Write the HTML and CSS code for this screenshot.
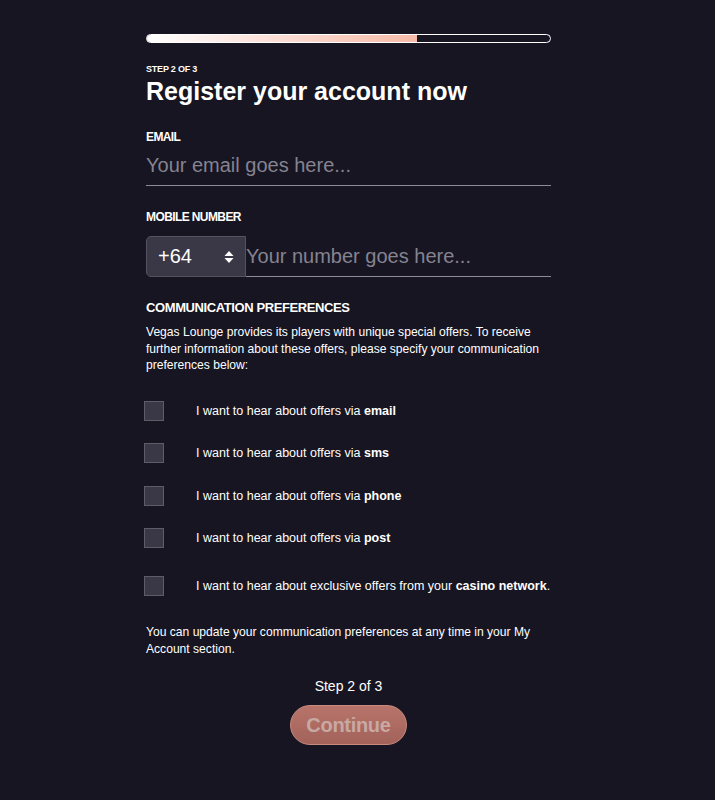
FILE: index.html
```html
<!DOCTYPE html>
<html>
<head lang="en">
    <meta charset="UTF-8">
    <title>Register your account</title>
    <link rel="stylesheet" href="styles.css">
</head>
<body>

<div id="container">
    <div class="progress">
        <div class="progress-fill"></div>
    </div>

    <p class="step-label">STEP 2 OF 3</p>
    <h1 class="title">Register your account now</h1>

    <div class="field">
        <label class="field-label">EMAIL</label>
        <input class="text-input email-input" type="text" placeholder="Your email goes here...">
    </div>

    <div class="field">
        <label class="field-label">MOBILE NUMBER</label>
        <div class="phone-row">
            <div class="prefix">
                <span>+64</span>
                <svg class="prefix-arrows" width="10" height="14" viewBox="0 0 10 14">
                    <path d="M5 1 L9.5 6 H0.5 Z" fill="#fff"/>
                    <path d="M5 13 L9.5 8 H0.5 Z" fill="#fff"/>
                </svg>
            </div>
            <input class="text-input phone-input" type="text" placeholder="Your number goes here...">
        </div>
    </div>

    <h2 class="section-title">COMMUNICATION PREFERENCES</h2>
    <p class="note">Vegas Lounge provides its players with unique special offers. To receive further information about these offers, please specify your communication preferences below:</p>

    <ul class="prefs">
        <li><span class="box"></span><span>I want to hear about offers via <b>email</b></span></li>
        <li><span class="box"></span><span>I want to hear about offers via <b>sms</b></span></li>
        <li><span class="box"></span><span>I want to hear about offers via <b>phone</b></span></li>
        <li><span class="box"></span><span>I want to hear about offers via <b>post</b></span></li>
        <li class="last"><span class="box"></span><span>I want to hear about exclusive offers from your <b>casino network</b>.</span></li>
    </ul>

    <p class="note">You can update your communication preferences at any time in your My Account section.</p>

    <p class="step-bottom">Step 2 of 3</p>
    <div class="actions">
        <button class="continue">Continue</button>
    </div>
</div>

</body>
</html>
```

FILE: styles.css
```css
* {
    margin: 0;
    padding: 0;
    box-sizing: border-box;
}

ul {
    list-style: none;
}

body {
    background: #171521;
    color: #ffffff;
    font-family: "Liberation Sans", Arial, sans-serif;
    padding-right: 18px;
}

#container {
    width: 405px;
    margin: 0 auto;
    padding-top: 34px;
}

.progress {
    height: 9px;
    border: 1.5px solid #ffffff;
    border-radius: 5px;
    overflow: hidden;
}

.progress-fill {
    width: 67%;
    height: 100%;
    background: linear-gradient(to right, #ffffff, #f6baa8);
}

.step-label {
    margin-top: 21px;
    font-size: 9px;
    font-weight: bold;
    letter-spacing: -0.2px;
}

.title {
    margin-top: 2px;
    font-size: 25px;
    font-weight: bold;
    line-height: 30px;
}

.field {
    margin-top: 24px;
}

.field-label {
    display: block;
    font-size: 12px;
    font-weight: bold;
    letter-spacing: -0.6px;
    line-height: 14px;
}

.text-input {
    display: block;
    width: 100%;
    height: 40px;
    background: transparent;
    border: none;
    border-bottom: 1px solid #8d8b97;
    color: #ffffff;
    font-family: "Liberation Sans", Arial, sans-serif;
    font-size: 20px;
    outline: none;
}

.text-input::placeholder {
    color: #858391;
}

.email-input {
    margin-top: 2px;
}

.phone-row {
    display: flex;
    margin-top: 12px;
}

.prefix {
    width: 100px;
    height: 41px;
    flex-shrink: 0;
    display: flex;
    align-items: center;
    justify-content: space-between;
    padding: 0 11px 0 11px;
    background: #3a3846;
    border: 1px solid #55535f;
    border-radius: 5px 0 0 5px;
    font-size: 20px;
}

.phone-input {
    flex: 1;
    height: 41px;
}

.section-title {
    margin-top: 23px;
    font-size: 13px;
    font-weight: bold;
    letter-spacing: -0.4px;
    line-height: 16px;
}

.note {
    margin-top: 8px;
    font-size: 12.1px;
    line-height: 16.5px;
}

.prefs {
    margin-top: 27px;
    margin-bottom: 28px;
}

.prefs li {
    display: flex;
    align-items: center;
    height: 20px;
    margin-bottom: 22.5px;
    font-size: 12.5px;
}

.prefs li.last {
    margin-top: 28px;
    margin-bottom: 0;
}

.prefs .box {
    width: 20px;
    height: 20px;
    margin-left: -2px;
    margin-right: 32px;
    flex-shrink: 0;
    background: #3a3846;
    border: 1px solid #5e5c68;
}

.step-bottom {
    margin-top: 20px;
    text-align: center;
    font-size: 14px;
    line-height: 18px;
}

.actions {
    display: flex;
    justify-content: center;
    margin-top: 10px;
}

.continue {
    width: 117px;
    height: 40px;
    border-radius: 20px;
    border: 1px solid #c98a7e;
    background: linear-gradient(to bottom, #b8746a, #a2625a);
    color: #c8a8a3;
    font-family: "Liberation Sans", Arial, sans-serif;
    font-size: 20px;
    font-weight: bold;
    letter-spacing: -0.3px;
}
```
